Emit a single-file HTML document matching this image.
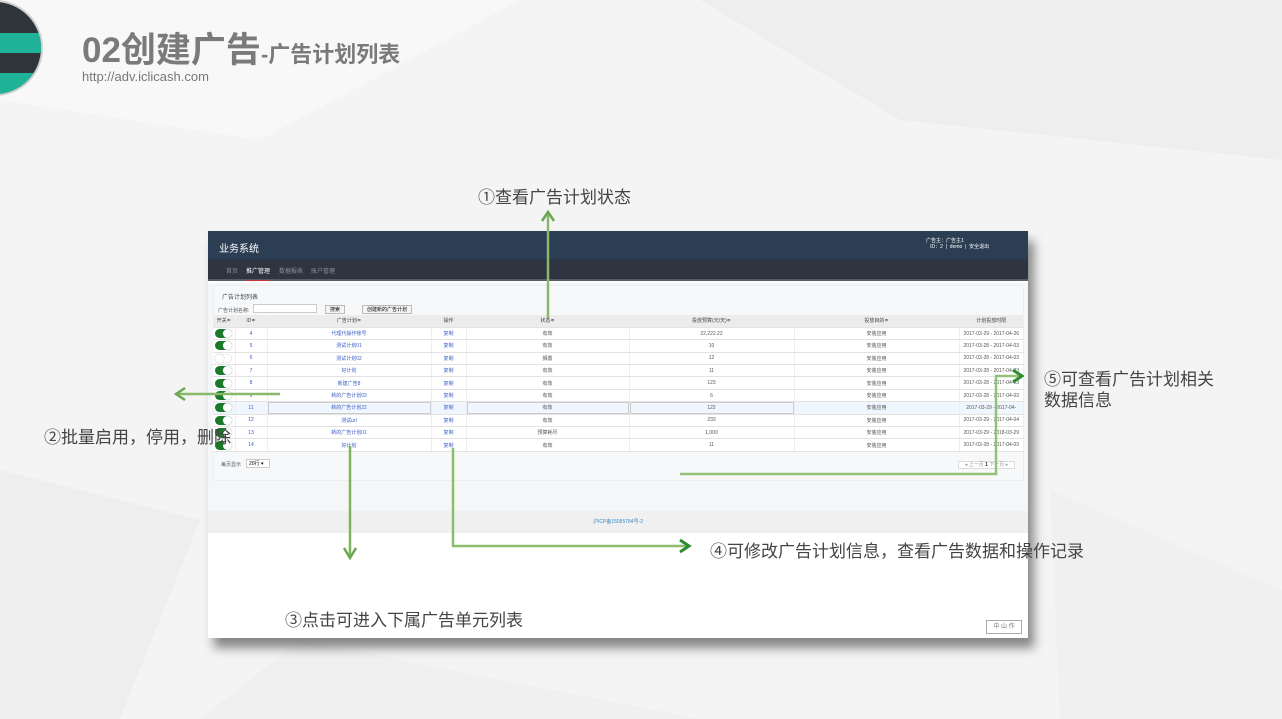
<!DOCTYPE html>
<html><head><meta charset="utf-8"><style>
*{margin:0;padding:0;box-sizing:border-box}
body{width:1282px;height:719px;overflow:hidden;position:relative;background:#f4f4f4;font-family:"Liberation Sans","Noto Sans CJK SC",sans-serif}
.abs{position:absolute}
.t{font-family:"Liberation Sans","Noto Sans CJK SC",sans-serif;color:#444;font-size:17px;white-space:nowrap}
.shot{left:208px;top:231px;width:820px;height:407px;background:#fff;box-shadow:6px 10px 10px rgba(0,0,0,.45)}
.hdr{left:0;top:0;width:820px;height:28px;background:#2b3e53;color:#fff;font-size:10px}
.nav{left:0;top:28px;width:820px;height:22px;background:#2e3440;border-bottom:2px solid #555c66}
.nav span{position:absolute;top:7px;font-size:6px;color:#8a9099}
.content{left:0;top:52px;width:820px;height:228px;background:#f5f6f8}
table{border-collapse:collapse;font-size:5px;color:#555;position:absolute;left:5px;top:84px;width:811px}
td{height:12.4px;text-align:center;border-bottom:1px solid #e3e3e3;border-right:1px solid #eee;background:#fff}
thead td{background:#ececec;color:#444}
td.b{color:#3a5cc4}
.sw{display:inline-block;width:17px;height:9px;border-radius:5px;background:#1b7a2a;position:relative;vertical-align:middle}
.sw:after{content:"";position:absolute;right:0;top:0;width:9px;height:9px;border-radius:5px;background:#fff;box-shadow:0 0 1px #888}
.sw.off{background:#fff;box-shadow:0 0 1px #aaa inset}
.sw.off:after{left:0;right:auto}
tr.hl td{background:#f0f6fd}
</style></head><body>
<svg class="abs" style="left:0;top:0" width="1282" height="719">
<polygon points="0,0 520,0 260,140 0,100" fill="#f8f8f8"/>
<polygon points="700,0 1282,0 1282,160 900,120" fill="#eeeeee"/>
<polygon points="0,470 200,520 120,719 0,719" fill="#eeeeee"/>
<polygon points="1050,490 1282,590 1282,719 1060,719" fill="#f0f0f0"/>
<polygon points="300,640 700,719 200,719" fill="#f0f0f0"/>
<g>
<clipPath id="c"><circle cx="-5" cy="48" r="46"/></clipPath>
<circle cx="-5" cy="48" r="48" fill="#d0d0d0"/>
<g clip-path="url(#c)">
<rect x="-60" y="0" width="110" height="100" fill="#2f3538"/>
<rect x="-60" y="33" width="110" height="20" fill="#1fb49a"/>
<rect x="-60" y="73" width="110" height="22" fill="#1fb49a"/>
</g></g>
</svg>
<div class="abs" style="left:82px;top:22px;font-size:35px;font-weight:bold;color:#7a7a7a;white-space:nowrap">02创建广告<span style="font-size:22px">-广告计划列表</span></div>
<div class="abs" style="left:82px;top:69px;font-size:13px;color:#777">http://adv.iclicash.com</div>

<div class="abs shot">
 <div class="abs hdr"><span class="abs" style="left:11px;top:9px">业务系统</span>
  <span class="abs" style="left:718px;top:7px;font-size:5px;line-height:6px">广告主：广告主1<br>&nbsp;&nbsp;&nbsp;ID：2 &nbsp;| &nbsp;demo &nbsp;| &nbsp;安全退出</span></div>
 <div class="abs nav"><span style="left:18px">首页</span><span style="left:38px;color:#fff;border-bottom:1px solid #c33;padding-bottom:5px">推广管理</span><span style="left:71px">数据报表</span><span style="left:103px">账户管理</span></div>
 <div class="abs content">
  <div class="abs" style="left:5px;top:2px;width:811px;height:196px;background:#f7f8fa;border:1px solid #eee"></div>
  <span class="abs" style="left:14px;top:9px;font-size:6px;color:#444">广告计划列表</span>
  <span class="abs" style="left:10px;top:24px;font-size:5px;color:#555">广告计划名称:</span>
  <div class="abs" style="left:45px;top:21px;width:64px;height:9px;background:#fff;border:1px solid #ccc"></div>
  <div class="abs" style="left:117px;top:22px;width:20px;height:9px;background:#f5f5f5;border:1px solid #bbb;font-size:5px;text-align:center;line-height:8px">搜索</div>
  <div class="abs" style="left:154px;top:22px;width:50px;height:9px;background:#f5f5f5;border:1px solid #bbb;font-size:5px;text-align:center;line-height:8px">创建新的广告计划</div>
  <span class="abs" style="left:13px;top:178px;font-size:5px;color:#555">每页显示</span>
  <div class="abs" style="left:38px;top:176px;width:24px;height:9px;background:#fff;border:1px solid #ccc;font-size:5px;line-height:8px;padding-left:2px">20行 ▾</div>
  <div class="abs" style="left:750px;top:178px;width:57px;height:8px;border:1px solid #ddd;background:#fff;font-size:5px;color:#999;line-height:7px;text-align:center">◂ 上一页 <b style="color:#333">1</b> 下一页 ▸</div>
 </div>
 <table>
  <colgroup><col style="width:22px"><col style="width:32px"><col style="width:164px"><col style="width:35px"><col style="width:163px"><col style="width:165px"><col style="width:165px"><col></colgroup>
  <thead><tr><td>开关≑</td><td>ID≑</td><td>广告计划≑</td><td>操作</td><td>状态≑</td><td>投放预算(元/天)≑</td><td>投放目的≑</td><td>计划投放时限</td></tr></thead>
  <tr><td><i class="sw"></i></td><td class="b">4</td><td class="b">代理代操作账号</td><td class="b">复制</td><td>有效</td><td>22,222.22</td><td>安装应用</td><td>2017-03-29 - 2017-04-26</td></tr>
  <tr><td><i class="sw"></i></td><td class="b">5</td><td class="b">测试计划01</td><td class="b">复制</td><td>有效</td><td>10</td><td>安装应用</td><td>2017-03-28 - 2017-04-03</td></tr>
  <tr><td><i class="sw off"></i></td><td class="b">6</td><td class="b">测试计划02</td><td class="b">复制</td><td>搁置</td><td>12</td><td>安装应用</td><td>2017-03-28 - 2017-04-03</td></tr>
  <tr><td><i class="sw"></i></td><td class="b">7</td><td class="b">好计划</td><td class="b">复制</td><td>有效</td><td>11</td><td>安装应用</td><td>2017-03-28 - 2017-04-03</td></tr>
  <tr><td><i class="sw"></i></td><td class="b">8</td><td class="b">新建广告8</td><td class="b">复制</td><td>有效</td><td>123</td><td>安装应用</td><td>2017-03-28 - 2017-04-03</td></tr>
  <tr><td><i class="sw"></i></td><td class="b">9</td><td class="b">新的广告计划03</td><td class="b">复制</td><td>有效</td><td>6</td><td>安装应用</td><td>2017-03-28 - 2017-04-03</td></tr>
  <tr class="hl"><td><i class="sw"></i></td><td class="b">11</td><td class="b" style="box-shadow:inset 0 0 0 1px #ccc">新的广告计划22</td><td class="b">复制</td><td style="box-shadow:inset 0 0 0 1px #ccc">有效</td><td style="box-shadow:inset 0 0 0 1px #ccc">122</td><td>安装应用</td><td>2017-03-29 - 2017-04-</td></tr>
  <tr><td><i class="sw"></i></td><td class="b">12</td><td class="b">测试url</td><td class="b">复制</td><td>有效</td><td>233</td><td>安装应用</td><td>2017-03-29 - 2017-04-04</td></tr>
  <tr><td><i class="sw"></i></td><td class="b">13</td><td class="b">新的广告计划01</td><td class="b">复制</td><td>预算耗尽</td><td>1,000</td><td>安装应用</td><td>2017-03-29 - 2018-03-29</td></tr>
  <tr><td><i class="sw"></i></td><td class="b">14</td><td class="b">好计划</td><td class="b">复制</td><td>有效</td><td>11</td><td>安装应用</td><td>2017-03-28 - 2017-04-03</td></tr>
 </table>
 <div class="abs" style="left:0;top:280px;width:820px;height:22px;background:#f0f0f0;font-size:5px;color:#3a8ac4;text-align:center;line-height:22px">沪ICP备15055784号-2</div>
 <div class="abs" style="left:778px;top:389px;width:36px;height:14px;border:1px solid #aaa;font-size:6px;color:#777;text-align:center;line-height:12px">中 山 作</div>
</div>

<svg class="abs" style="left:0;top:0" width="1282" height="719">
<g fill="none" stroke-width="2.5">
<line x1="548" y1="318" x2="548" y2="214" stroke="#8ab86a"/>
<polyline points="542,221 548,212 554,221" stroke="#6aa84f"/>
<line x1="280" y1="394" x2="177" y2="394" stroke="#8ab86a"/>
<polyline points="185,388 176,394 185,400" stroke="#6aa84f"/>
<line x1="350" y1="446" x2="350" y2="556" stroke="#7fb35e"/>
<polyline points="344,548 350,558 356,548" stroke="#6aa84f"/>
<polyline points="453,448 453,546 688,546" stroke="#8cbd6a"/>
<polyline points="680,540 689,546 680,552" stroke="#2e8b2e" stroke-width="3"/>
<polyline points="680,474 996,474 996,376 1020,376" stroke="#93c17a"/>
<polyline points="1013,370 1022,376 1013,382" stroke="#2e8b2e" stroke-width="3"/>
</g>
</svg>
<div class="abs t" style="left:478px;top:183px">①查看广告计划状态</div>
<div class="abs t" style="left:44px;top:423px">②批量启用，停用，删除</div>
<div class="abs t" style="left:285px;top:606px">③点击可进入下属广告单元列表</div>
<div class="abs t" style="left:710px;top:537px">④可修改广告计划信息，查看广告数据和操作记录</div>
<div class="abs t" style="left:1044px;top:369px;line-height:21px">⑤可查看广告计划相关<br>数据信息</div>
</body></html>
